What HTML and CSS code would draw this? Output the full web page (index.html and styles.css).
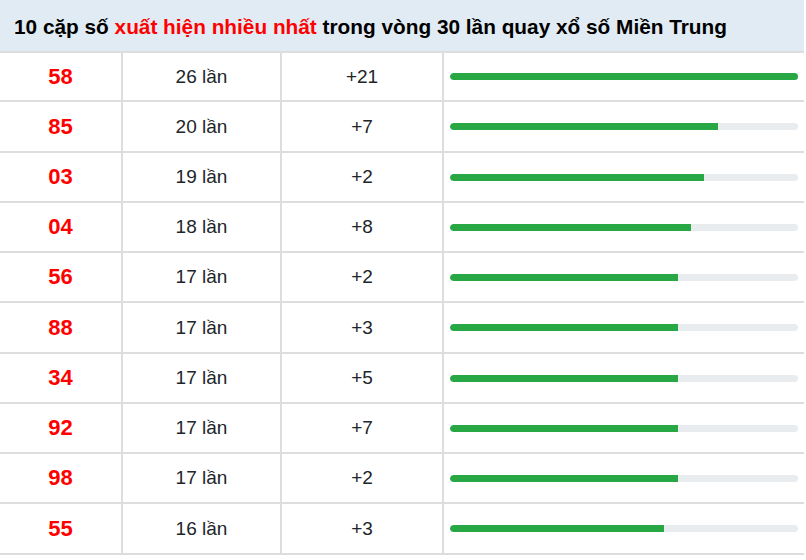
FILE: index.html
```html
<!DOCTYPE html>
<html lang="vi">
<head>
<meta charset="utf-8">
<link rel="stylesheet" href="styles.css">
</head>
<body>
<div class="board">
  <div class="title">10 cặp số <span class="hl">xuất hiện nhiều nhất</span> trong vòng 30 lần quay xổ số Miền Trung</div>
  <table class="stats">
    <tr><td class="num">58</td><td class="cnt">26 lần</td><td class="diff">+21</td><td class="barcell"><div class="track"><div class="fill" style="width:100%"></div></div></td></tr>
    <tr><td class="num">85</td><td class="cnt">20 lần</td><td class="diff">+7</td><td class="barcell"><div class="track"><div class="fill" style="width:76.9%"></div></div></td></tr>
    <tr><td class="num">03</td><td class="cnt">19 lần</td><td class="diff">+2</td><td class="barcell"><div class="track"><div class="fill" style="width:73.1%"></div></div></td></tr>
    <tr><td class="num">04</td><td class="cnt">18 lần</td><td class="diff">+8</td><td class="barcell"><div class="track"><div class="fill" style="width:69.2%"></div></div></td></tr>
    <tr><td class="num">56</td><td class="cnt">17 lần</td><td class="diff">+2</td><td class="barcell"><div class="track"><div class="fill" style="width:65.4%"></div></div></td></tr>
    <tr><td class="num">88</td><td class="cnt">17 lần</td><td class="diff">+3</td><td class="barcell"><div class="track"><div class="fill" style="width:65.4%"></div></div></td></tr>
    <tr><td class="num">34</td><td class="cnt">17 lần</td><td class="diff">+5</td><td class="barcell"><div class="track"><div class="fill" style="width:65.4%"></div></div></td></tr>
    <tr><td class="num">92</td><td class="cnt">17 lần</td><td class="diff">+7</td><td class="barcell"><div class="track"><div class="fill" style="width:65.4%"></div></div></td></tr>
    <tr><td class="num">98</td><td class="cnt">17 lần</td><td class="diff">+2</td><td class="barcell"><div class="track"><div class="fill" style="width:65.4%"></div></div></td></tr>
    <tr><td class="num">55</td><td class="cnt">16 lần</td><td class="diff">+3</td><td class="barcell"><div class="track"><div class="fill" style="width:61.5%"></div></div></td></tr>
  </table>
</div>
</body>
</html>
```

FILE: styles.css
```css
html, body {
  margin: 0;
  padding: 0;
  background: #ffffff;
}
body {
  font-family: "Liberation Sans", Arial, sans-serif;
  color: #212529;
}
.board {
  width: 804px;
}
.title {
  height: 53px;
  box-sizing: border-box;
  padding: 0 0 0 14px;
  line-height: 53px;
  background: #e1ebf3;
  border-bottom: 2px solid #dddddd;
  font-size: 20.8px;
  font-weight: bold;
  color: #000000;
  white-space: nowrap;
}
.hl {
  color: #ff0000;
}
.stats {
  width: 804px;
  border-collapse: collapse;
  table-layout: fixed;
}
.stats td {
  height: 48px;
  padding: 0;
  border-bottom: 2px solid #dddddd;
  border-left: 2px solid #dddddd;
  text-align: center;
  vertical-align: middle;
  font-size: 19px;
}
.stats tr:first-child td {
  height: 47px;
}
.stats tr:nth-child(4n+2) td {
  height: 49px;
}
.stats td:first-child {
  border-left: none;
}
.num {
  width: 121px;
  color: #ff0000;
  font-weight: bold;
  font-size: 22px !important;
}
.cnt {
  width: 157px;
}
.diff {
  width: 160px;
}
.stats td.barcell {
  padding: 0 6px;
}
.track {
  height: 7px;
  border-radius: 4px;
  background: #e9ecef;
  overflow: hidden;
}
.fill {
  height: 100%;
  background: #28a745;
  border-radius: 4px 0 0 4px;
}
```
